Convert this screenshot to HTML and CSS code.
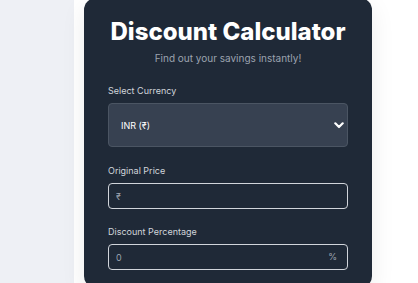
FILE: index.html
```html
<!DOCTYPE html>
<html lang="en">
<head>
<meta charset="utf-8">
<title>Discount Calculator</title>
<link rel="stylesheet" href="styles.css">
</head>
<body>
<div class="page">
  <aside class="side"></aside>
  <main class="main">
    <section class="card">
      <h1 class="title">Discount Calculator</h1>
      <p class="subtitle">Find out your savings instantly!</p>

      <div class="field field-select">
        <label class="label" for="cur">Select Currency</label>
        <div class="select-wrap">
          <select id="cur" class="select">
            <option>INR (₹)</option>
          </select>
          <svg class="chev" width="10" height="7" viewBox="0 0 10 7"><path d="M1.3 1.3 L5 5 L8.7 1.3" fill="none" stroke="#ffffff" stroke-width="2.2" stroke-linecap="round" stroke-linejoin="round"/></svg>
        </div>
      </div>

      <div class="field field-price">
        <label class="label" for="price">Original Price</label>
        <input id="price" class="input" type="text" placeholder="₹">
      </div>

      <div class="field field-disc">
        <label class="label" for="disc">Discount Percentage</label>
        <div class="input-wrap">
          <input id="disc" class="input" type="text" placeholder="0">
          <span class="suffix">%</span>
        </div>
      </div>
    </section>
  </main>
</div>
</body>
</html>
```
FILE: styles.css
```css
* { box-sizing: border-box; }
html, body { margin: 0; padding: 0; }
body {
  font-family: Inter, "Noto Sans", sans-serif;
  background: #ffffff;
  overflow: hidden;
}
.page {
  display: flex;
  height: 283px;
  overflow: hidden;
}
.side {
  width: 74px;
  flex: none;
  background: #eef0f5;
}
.main {
  flex: 1;
  background: #ffffff;
  padding-left: 10px;
}
.card {
  width: 288px;
  margin-top: -2px;
  height: 290px;
  background: #1f2937;
  border-radius: 12px;
  padding: 19px 24px 0;
  box-shadow: 0 8px 24px rgba(0, 0, 0, 0.08);
}
.title {
  margin: 0;
  text-align: center;
  color: #ffffff;
  font-size: 24px;
  line-height: 30px;
  font-weight: 800;
}
.subtitle {
  margin: 4px 0 0;
  text-align: center;
  color: #9ca3af;
  font-size: 10px;
  line-height: 14px;
}
.field-select { margin-top: 20px; }
.field-price { margin-top: 18px; }
.field-disc { margin-top: 17px; }
.label {
  display: block;
  color: #d1d5db;
  font-size: 9px;
  line-height: 12px;
  margin-bottom: 6px;
}
.select-wrap, .input-wrap { position: relative; }
.select {
  display: block;
  width: 100%;
  height: 44px;
  appearance: none;
  -webkit-appearance: none;
  background: #374151;
  border: 1px solid #4b5563;
  border-radius: 4px;
  color: #ffffff;
  font-family: Inter, "Noto Sans", sans-serif;
  font-size: 9px;
  padding: 0 12px;
  outline: none;
}
.chev {
  position: absolute;
  right: 4px;
  top: 19px;
}
.input {
  display: block;
  width: 100%;
  height: 26px;
  background: transparent;
  border: 1px solid #d1d5db;
  border-radius: 4px;
  color: #ffffff;
  font-family: Inter, "Noto Sans", sans-serif;
  font-size: 9px;
  padding: 0 7px;
  outline: none;
}
.input::placeholder { color: #9ca3af; }
.suffix {
  position: absolute;
  right: 11px;
  top: 7px;
  color: #9ca3af;
  font-size: 9px;
  line-height: 12px;
}
```
